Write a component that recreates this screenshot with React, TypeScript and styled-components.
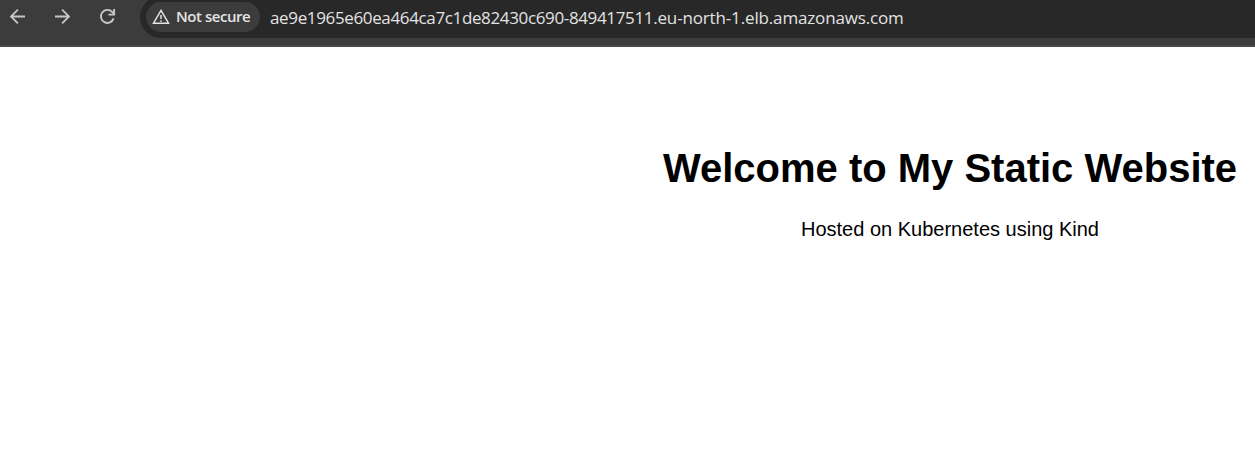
import React from "react";
import styled, { createGlobalStyle } from "styled-components";

const GlobalStyle = createGlobalStyle`
  body { margin: 0; background: #fff; overflow: hidden; }
`;

const Window = styled.div`
  display: flex;
  flex-direction: column;
  width: 100%;
  height: 453px;
  overflow: hidden;
`;

const Toolbar = styled.header`
  box-sizing: border-box;
  display: flex;
  align-items: flex-start;
  flex: none;
  height: 47px;
  overflow: hidden;
  background: #3c3c3c;
  border-bottom: 2px solid #474747;
`;

const Navigation = styled.nav`
  display: flex;
  flex: none;
  width: 140px;
  padding: 7px 0 0 8px;
  box-sizing: border-box;
  gap: 25px;
`;

const NavButton = styled.button`
  display: flex;
  width: 20px;
  height: 20px;
  padding: 0;
  border: 0;
  background: none;
  color: #c7c7c7;
`;

const AddressBar = styled.div`
  display: flex;
  align-items: center;
  box-sizing: border-box;
  flex: 1;
  height: 42px;
  margin-top: -4px;
  padding-left: 6px;
  border-radius: 21px 0 0 21px;
  background: #282828;
`;

const SecurityChip = styled.div`
  box-sizing: border-box;
  display: flex;
  align-items: center;
  flex: none;
  width: 114px;
  height: 30px;
  padding-left: 6px;
  gap: 6px;
  border-radius: 15px;
  background: #3c3c3c;
  color: #e3e3e3;
  white-space: nowrap;
`;

const ChipLabel = styled.span`
  padding-bottom: 2px;
  font: 600 15px/20px "Open Sans", sans-serif;
  letter-spacing: -0.45px;
`;

const Address = styled.span`
  margin-left: 10px;
  padding-top: 2px;
  color: #e3e3e3;
  white-space: nowrap;
  font: 400 17px/24px "Open Sans", sans-serif;
  letter-spacing: -0.36px;
`;

const Domain = styled.span`
  letter-spacing: -0.15px;
`;

const Page = styled.main`
  flex: 1;
  width: 1900px;
  padding-top: 98px;
  box-sizing: border-box;
  background: #fff;
  color: #000;
  text-align: center;
  font-family: "Liberation Sans", Arial, sans-serif;
`;

const Title = styled.h1`
  margin: 0;
  font-size: 40px;
  line-height: 46px;
`;

const Subtitle = styled.p`
  margin: 27px 0 0;
  font-size: 20px;
  line-height: 23px;
`;

const ArrowIcon = ({ forward = false }: { forward?: boolean }) => (
  <svg width="20" height="20" viewBox="0 0 20 20" fill="none" stroke="currentColor" strokeWidth="1.8">
    <path d={forward ? "M2 9.5H16.4M9.1 2.6L16 9.5L9.1 16.4" : "M17 9.5H3M9.9 2.6L3 9.5L9.9 16.4"} />
  </svg>
);

const ReloadIcon = () => (
  <svg width="20" height="20" viewBox="0 0 20 20" fill="none" stroke="currentColor" strokeWidth="1.9">
    <path d="M15.6 11.4A6.5 6.5 0 1 1 14.1 4.9L16 6.8" />
    <path d="M16.1 2V7.6H10.5" />
  </svg>
);

const WarningIcon = () => (
  <svg width="18" height="18" viewBox="0 0 18 18" fill="none" stroke="currentColor" strokeWidth="1.5">
    <path d="M9 2.4L16.5 15.2H1.5Z" />
    <path d="M9 6.9V11M9 12.2V13.7" />
  </svg>
);

export default function App() {
  return (
    <Window>
      <GlobalStyle />
      <Toolbar>
        <Navigation>
          <NavButton aria-label="Back"><ArrowIcon /></NavButton>
          <NavButton aria-label="Forward"><ArrowIcon forward /></NavButton>
          <NavButton aria-label="Reload"><ReloadIcon /></NavButton>
        </Navigation>
        <AddressBar>
          <SecurityChip><WarningIcon /><ChipLabel>Not secure</ChipLabel></SecurityChip>
          <Address>ae9e1965e60ea464ca7c1de82430c690-849417511<Domain>.eu-north-1.elb.amazonaws.com</Domain></Address>
        </AddressBar>
      </Toolbar>
      <Page>
        <Title>Welcome to My Static Website</Title>
        <Subtitle>Hosted on Kubernetes using Kind</Subtitle>
      </Page>
    </Window>
  );
}
